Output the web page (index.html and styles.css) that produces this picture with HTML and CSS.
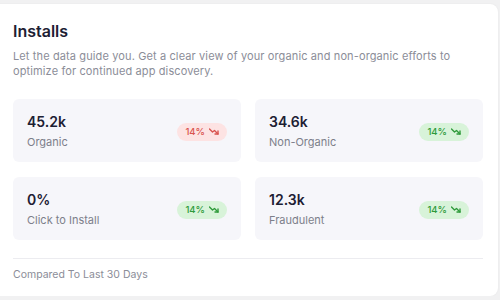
FILE: index.html
```html
<!DOCTYPE html>
<html lang="en">
<head>
    <meta charset="UTF-8">
    <title>Installs</title>
    <link rel="stylesheet" href="styles.css">
</head>
<body>
<div class="card">
    <h2 class="title">Installs</h2>
    <p class="desc">Let the data guide you. Get a clear view of your organic and non-organic efforts to optimize for continued app discovery.</p>

    <div class="tiles">
        <div class="tile">
            <div class="info">
                <div class="value">45.2k</div>
                <div class="label">Organic</div>
            </div>
            <span class="badge down">14% <svg viewBox="0 0 10 7" class="arrow"><polyline points="0.5,1 3.5,4 5.5,2.5 9,6"/><polyline points="9,3 9,6 6,6"/></svg></span>
        </div>
        <div class="tile">
            <div class="info">
                <div class="value">34.6k</div>
                <div class="label">Non-Organic</div>
            </div>
            <span class="badge up">14% <svg viewBox="0 0 10 7" class="arrow"><polyline points="0.5,1 3.5,4 5.5,2.5 9,6"/><polyline points="9,3 9,6 6,6"/></svg></span>
        </div>
        <div class="tile">
            <div class="info">
                <div class="value">0%</div>
                <div class="label">Click to Install</div>
            </div>
            <span class="badge up">14% <svg viewBox="0 0 10 7" class="arrow"><polyline points="0.5,1 3.5,4 5.5,2.5 9,6"/><polyline points="9,3 9,6 6,6"/></svg></span>
        </div>
        <div class="tile">
            <div class="info">
                <div class="value">12.3k</div>
                <div class="label">Fraudulent</div>
            </div>
            <span class="badge up">14% <svg viewBox="0 0 10 7" class="arrow"><polyline points="0.5,1 3.5,4 5.5,2.5 9,6"/><polyline points="9,3 9,6 6,6"/></svg></span>
        </div>
    </div>

    <div class="footer">Compared To Last 30 Days</div>
</div>
</body>
</html>
```

FILE: styles.css
```css
html, body, div, p, h2 {
    margin: 0;
    padding: 0;
}

body {
    background: #f1f1f2;
    font-family: "Inter", "Noto Sans", sans-serif;
}

.card {
    height: 292px;
    box-sizing: border-box;
    margin: 4px 2px 0 -8px;
    padding: 16px 15px 0 21px;
    background: #fff;
    border-radius: 8px;
    box-shadow: 0 0 2px rgba(0, 0, 0, 0.06);
}

.title {
    font-size: 16px;
    line-height: 22px;
    font-weight: 600;
    color: #1d2033;
}

.desc {
    margin-top: 7px;
    font-size: 11px;
    line-height: 15px;
    letter-spacing: 0.12px;
    color: #8b8d98;
}

.tiles {
    display: grid;
    grid-template-columns: 1fr 1fr;
    gap: 15px 14px;
    margin-top: 20px;
}

.tile {
    display: flex;
    align-items: center;
    justify-content: space-between;
    padding: 14px 14px 12px;
    background: #f6f6fa;
    border-radius: 6px;
}

.value {
    font-size: 14px;
    line-height: 18px;
    font-weight: 600;
    color: #1d2033;
}

.label {
    margin-top: 3px;
    font-size: 11px;
    line-height: 16px;
    color: #7d7f8a;
}

.badge {
    display: flex;
    align-items: center;
    gap: 4px;
    height: 18px;
    padding: 0 8px;
    border-radius: 9px;
    font-size: 9.5px;
    font-weight: 500;
}

.badge.down {
    background: #fde3e3;
    color: #d9534f;
}

.badge.up {
    background: #d8f3d9;
    color: #2f9a3b;
}

.arrow {
    width: 10px;
    height: 7px;
    fill: none;
    stroke: currentColor;
    stroke-width: 1.4;
    stroke-linecap: round;
    stroke-linejoin: round;
}

.footer {
    margin-top: 18px;
    padding-top: 8px;
    border-top: 1px solid #ececf0;
    font-size: 10.5px;
    line-height: 16px;
    color: #8b8d98;
}
```
